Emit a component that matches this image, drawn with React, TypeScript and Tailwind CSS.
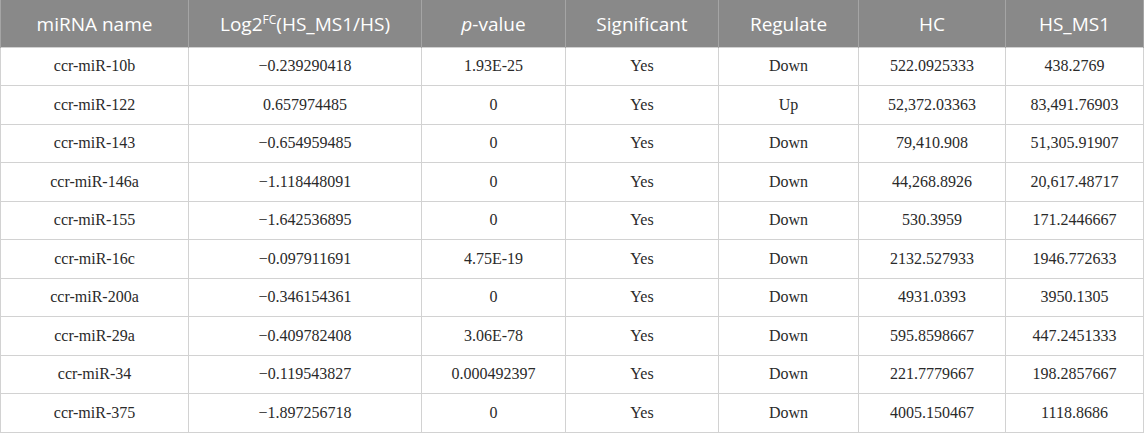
const rows = [
  ["ccr-miR-10b", "−0.239290418", "1.93E-25", "Yes", "Down", "522.0925333", "438.2769"],
  ["ccr-miR-122", "0.657974485", "0", "Yes", "Up", "52,372.03363", "83,491.76903"],
  ["ccr-miR-143", "−0.654959485", "0", "Yes", "Down", "79,410.908", "51,305.91907"],
  ["ccr-miR-146a", "−1.118448091", "0", "Yes", "Down", "44,268.8926", "20,617.48717"],
  ["ccr-miR-155", "−1.642536895", "0", "Yes", "Down", "530.3959", "171.2446667"],
  ["ccr-miR-16c", "−0.097911691", "4.75E-19", "Yes", "Down", "2132.527933", "1946.772633"],
  ["ccr-miR-200a", "−0.346154361", "0", "Yes", "Down", "4931.0393", "3950.1305"],
  ["ccr-miR-29a", "−0.409782408", "3.06E-78", "Yes", "Down", "595.8598667", "447.2451333"],
  ["ccr-miR-34", "−0.119543827", "0.000492397", "Yes", "Down", "221.7779667", "198.2857667"],
  ["ccr-miR-375", "−1.897256718", "0", "Yes", "Down", "4005.150467", "1118.8686"],
]

const widths = [188, 233, 144, 153, 140, 147, 138]

export default function App() {
  return (
    <div className="w-[1145px] h-[433px] bg-white">
      <table className="w-[1143px] table-fixed border-collapse">
        <colgroup>
          {widths.map((w, i) => (
            <col key={i} style={{ width: w }} />
          ))}
        </colgroup>
        <thead>
          <tr className="h-[47px] bg-[#898989] text-white text-[19px] leading-none font-['Open_Sans',sans-serif]">
            <th className="font-normal pt-[3px] border-x border-[#a5a5a5]">miRNA name</th>
            <th className="font-normal pt-[3px] border-x border-[#a5a5a5]">
              Log2<span className="relative -top-[7px] text-[12px]">FC</span>(HS_MS1/HS)
            </th>
            <th className="font-normal pt-[3px] border-x border-[#a5a5a5]">
              <i>p</i>-value
            </th>
            <th className="font-normal pt-[3px] border-x border-[#a5a5a5]">Significant</th>
            <th className="font-normal pt-[3px] border-x border-[#a5a5a5]">Regulate</th>
            <th className="font-normal pt-[3px] border-x border-[#a5a5a5]">HC</th>
            <th className="font-normal pt-[3px] border-x border-[#a5a5a5]">HS_MS1</th>
          </tr>
        </thead>
        <tbody className="font-['Liberation_Serif',serif] text-[16px] text-[#2a2a2a]">
          {rows.map((r) => (
            <tr key={r[0]} className="h-[38.5px]">
              {r.map((c, j) => (
                <td key={j} className="text-center border border-[#d2d2d2]">
                  {c}
                </td>
              ))}
            </tr>
          ))}
        </tbody>
      </table>
    </div>
  )
}
